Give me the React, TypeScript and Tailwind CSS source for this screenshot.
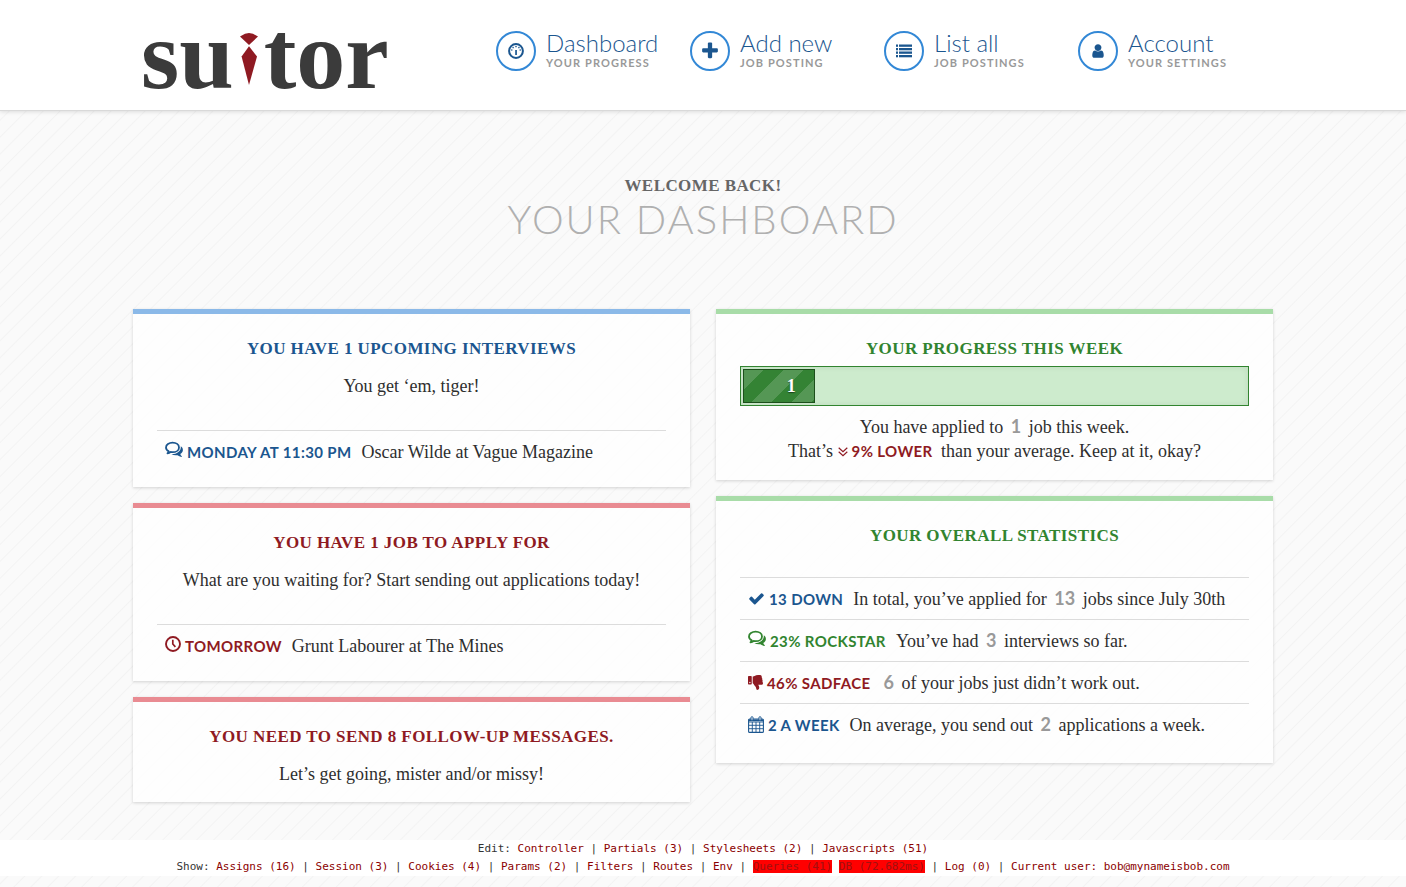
import type { ReactNode } from "react";
import { FaThumbsDown } from "react-icons/fa";

const SANS = "font-['Lato','Open_Sans',sans-serif]";
const STRIPES =
  "bg-[#fafafa] bg-[repeating-linear-gradient(135deg,#fafafa_0px,#f3f3f3_1px,#fafafa_2px,#fafafa_12px)]";

const PATHS = {
  plus: "M1600 736v192q0 40-28 68t-68 28h-416v416q0 40-28 68t-68 28h-192q-40 0-68-28t-28-68v-416h-416q-40 0-68-28t-28-68v-192q0-40 28-68t68-28h416v-416q0-40 28-68t68-28h192q40 0 68 28t28 68v416h416q40 0 68 28t28 68z",
  check:
    "M1671 566q0 40-28 68l-724 724-136 136q-28 28-68 28t-68-28l-136-136-362-362q-28-28-28-68t28-68l136-136q28-28 68-28t68 28l294 295 656-657q28-28 68-28t68 28l136 136q28 28 28 68z",
  user: "M1536 1399q0 109-62.5 187t-150.5 78h-854q-88 0-150.5-78t-62.5-187q0-85 8.5-160.5t31.5-152 58.5-131 94-89 134.5-34.5q131 128 313 128t313-128q76 0 134.5 34.5t94 89 58.5 131 31.5 152 8.5 160.5zm-256-887q0 159-112.5 271.5t-271.5 112.5-271.5-112.5-112.5-271.5 112.5-271.5 271.5-112.5 271.5 112.5 112.5 271.5z",
};

function Glyph({ name, className }: { name: keyof typeof PATHS; className: string }) {
  return (
    <svg viewBox="0 0 1792 1792" fill="currentColor" aria-hidden="true" className={className}>
      <path d={PATHS[name]} />
    </svg>
  );
}

function CommentsIcon() {
  return (
    <svg viewBox="0 0 18 17" aria-hidden="true" className="-mt-1 h-[17px] w-[18px]">
      <path
        d="M7.6 1.6c3.6 0 6.4 2 6.4 4.8s-2.8 4.8-6.4 4.8c-.7 0-1.3-.1-1.9-.2-.9.7-1.9 1.2-3.2 1.4.6-.7 1-1.4 1.2-2.2C2 9.3 1 8 1 6.4c0-2.8 3-4.8 6.6-4.8z"
        fill="none"
        stroke="currentColor"
        strokeWidth="1.8"
        strokeLinejoin="round"
      />
      <path
        d="M15.8 5.2c1.3.9 2.1 2.2 2.1 3.7 0 1.7-1 3.1-2.6 4 .2.8.7 1.6 1.5 2.4.2.3 0 .6-.3.6-1.5-.2-2.9-.8-4-1.7-2.2.4-4.4 0-6.1-1.1 5.3.1 9.9-2.7 9.4-7.9z"
        fill="currentColor"
      />
    </svg>
  );
}

function GaugeIcon() {
  return (
    <svg viewBox="0 0 16 16" aria-hidden="true" className="size-4">
      <circle cx="8" cy="8" r="6.9" fill="none" stroke="currentColor" strokeWidth="2" />
      <g fill="currentColor">
        <rect x="7.2" y="7" width="1.7" height="5" />
        <circle cx="3.8" cy="7" r=".8" />
        <circle cx="5.1" cy="4.6" r=".8" />
        <circle cx="8" cy="3.6" r=".8" />
        <circle cx="10.9" cy="4.6" r=".8" />
        <circle cx="12.2" cy="7" r=".8" />
      </g>
    </svg>
  );
}

function ListIcon() {
  return (
    <svg viewBox="0 0 16 14" fill="currentColor" aria-hidden="true" className="h-3.5 w-4">
      {[0.5, 4, 7.5, 11].map((y) => (
        <g key={y}>
          <rect x="0" y={y} width="2" height="2.3" />
          <rect x="3" y={y} width="13" height="2.3" />
        </g>
      ))}
    </svg>
  );
}

function ClockIcon() {
  return (
    <svg viewBox="0 0 16 16" fill="none" stroke="currentColor" aria-hidden="true" className="-mt-1 size-4">
      <circle cx="8" cy="8" r="7" strokeWidth="1.9" />
      <path d="M7.8 3.8V8l2.6 2.8" strokeWidth="1.7" />
    </svg>
  );
}

function CalendarIcon() {
  return (
    <svg viewBox="0 0 16 17" fill="none" stroke="currentColor" aria-hidden="true" className="h-[17px] w-4">
      <rect x=".6" y="3" width="14.8" height="13.4" rx="1" strokeWidth="1.1" />
      <path d="M.6 3.4h14.8v1.8H.6z" fill="currentColor" stroke="none" />
      <path d="M1 6h14M1 9.3h14M1 12.7h14M4.3 6v10M8 6v10M11.7 6v10" strokeWidth=".9" />
      <rect x="3" y=".7" width="2" height="3.6" rx=".9" fill="#fff" strokeWidth="1" />
      <rect x="11" y=".7" width="2" height="3.6" rx=".9" fill="#fff" strokeWidth="1" />
    </svg>
  );
}

function DoubleChevronDown() {
  return (
    <svg
      viewBox="0 0 10 10"
      fill="none"
      stroke="currentColor"
      strokeWidth="1.2"
      aria-hidden="true"
      className="mr-1 inline-block size-2.5 align-baseline"
    >
      <path d="M.7 .8L5 4.8 9.3 .8M.7 4.8L5 8.8 9.3 4.8" />
    </svg>
  );
}

function Logo() {
  return (
    <a
      href="#home"
      aria-label="suitor"
      className="ml-2 flex items-start font-['Liberation_Serif',serif] text-[98px] leading-[110px] font-bold text-[#3b3b3b]"
    >
      <span>su</span>
      <svg viewBox="0 0 18 52" aria-hidden="true" className="mx-[6px] mt-[33px] h-[52px] w-[18px]" fill="#8f1a22">
        <path d="M0 3.5 5 .8 9 0l4 .8 5 2.7L9 12z" />
        <path d="M9 13.2 17 23.5 9 52 1.6 23.5z" />
      </svg>
      <span>tor</span>
    </a>
  );
}

const NAV: { title: string; sub: string; icon: ReactNode }[] = [
  { title: "Dashboard", sub: "Your progress", icon: <GaugeIcon /> },
  { title: "Add new", sub: "Job posting", icon: <Glyph name="plus" className="size-5" /> },
  { title: "List all", sub: "Job postings", icon: <ListIcon /> },
  { title: "Account", sub: "Your settings", icon: <Glyph name="user" className="size-4" /> },
];

const TONES = {
  blue: { border: "border-[#8bb9e8]", text: "text-[#1b568f]" },
  red: { border: "border-[#e98b92]", text: "text-[#8f1a22]" },
  green: { border: "border-[#a8dca8]", text: "text-[#31842f]" },
};
type Tone = keyof typeof TONES;

function Card({ tone, title, className, children }: { tone: Tone; title: string; className: string; children: ReactNode }) {
  return (
    <section
      className={`border-t-[5px] bg-white/80 px-6 pt-6 text-center shadow-[0_1px_3px_rgba(0,0,0,0.16)] ${TONES[tone].border} ${className}`}
    >
      <h2 className={`text-[17px] leading-[22px] font-bold tracking-wide uppercase ${TONES[tone].text}`}>{title}</h2>
      {children}
    </section>
  );
}

function Row({ tone, icon, label, children }: { tone: Tone; icon: ReactNode; label: string; children: ReactNode }) {
  return (
    <li className="flex h-[42px] items-center border-t border-[#dcdcdc] px-2 text-left">
      <span className={`mr-[10px] flex items-center gap-1 text-[15px] font-bold tracking-wide uppercase ${SANS} ${TONES[tone].text}`}>
        {icon}
        {label}
      </span>
      <span>{children}</span>
    </li>
  );
}

function Num({ children }: { children: ReactNode }) {
  return <span className={`mx-[3px] text-lg leading-none font-bold text-[#999] ${SANS}`}>{children}</span>;
}

const EDIT_LINKS = ["Controller", "Partials (3)", "Stylesheets (2)", "Javascripts (51)"];
const SHOW_LINKS = ["Assigns (16)", "Session (3)", "Cookies (4)", "Params (2)", "Filters", "Routes", "Env"];

export default function App() {
  return (
    <div className={`min-h-screen font-['Liberation_Serif',serif] text-lg leading-6 text-[#2e2e2e] ${STRIPES}`}>
      <header className="border-b border-[#d9d9d9] bg-white shadow-[0_1px_4px_rgba(0,0,0,0.12)]">
        <div className="mx-auto flex h-[110px] max-w-[1140px] items-start">
          <Logo />
          <nav className="mt-[30px] mr-px ml-auto grid grid-cols-[repeat(4,194px)]">
            {NAV.map((item) => (
              <a key={item.title} href="#nav" className={`flex items-start gap-[10px] ${SANS}`}>
                <span className="mt-px flex size-10 items-center justify-center rounded-full border-2 border-[#3388d6] text-[#1b568f]">
                  {item.icon}
                </span>
                <span className="flex flex-col">
                  <span className="text-2xl leading-[26px] font-light text-[#1b568f]">{item.title}</span>
                  <span className="text-[11px] leading-[14px] font-bold tracking-widest text-[#999] uppercase">{item.sub}</span>
                </span>
              </a>
            ))}
          </nav>
        </div>
      </header>

      <main className="mx-auto max-w-[1140px]">
        <div className="pt-[63px] text-center uppercase">
          <p className="text-[17px] leading-6 font-bold tracking-wide text-[#666]">Welcome back!</p>
          <h1 className={`text-[40px] leading-[42px] font-light tracking-wider text-[#b0b0b0] ${SANS}`}>Your dashboard</h1>
        </div>

        <div className="mt-[69px] grid grid-cols-2 items-start gap-[26px]">
          <div className="flex flex-col gap-4">
            <Card tone="blue" title="You have 1 upcoming interviews" className="pb-[15px]">
              <p className="mt-[14px]">You get ‘em, tiger!</p>
              <ul className="mt-8">
                <Row tone="blue" label="Monday at 11:30 PM" icon={<CommentsIcon />}>
                  Oscar Wilde at Vague Magazine
                </Row>
              </ul>
            </Card>
            <Card tone="red" title="You have 1 job to apply for" className="pb-[15px]">
              <p className="mt-[14px]">What are you waiting for? Start sending out applications today!</p>
              <ul className="mt-8">
                <Row tone="red" label="Tomorrow" icon={<ClockIcon />}>
                  Grunt Labourer at The Mines
                </Row>
              </ul>
            </Card>
            <Card tone="red" title="You need to send 8 follow-up messages." className="pb-4">
              <p className="mt-[14px]">Let’s get going, mister and/or missy!</p>
            </Card>
          </div>

          <div className="flex flex-col gap-4">
            <Card tone="green" title="Your progress this week" className="pb-[17px]">
              <div
                role="progressbar"
                aria-label="Applications this week"
                aria-valuenow={1}
                className="mt-[6px] h-10 border border-[#31842f] bg-[#cdebcd] p-0.5 shadow-[inset_0_0_6px_rgba(0,0,0,0.08)]"
              >
                <div
                  className="flex h-full items-center justify-end border border-[#1d4f1c] bg-[#348334] bg-[linear-gradient(135deg,rgba(255,255,255,0.16)_25%,transparent_25%,transparent_50%,rgba(255,255,255,0.16)_50%,rgba(255,255,255,0.16)_75%,transparent_75%)] bg-[length:40px_40px] pr-[18px] font-bold text-white [text-shadow:0_1px_1px_rgba(0,0,0,0.5)]"
                  style={{ width: `${(1 / 7) * 100}%` }}
                >
                  1
                </div>
              </div>
              <p className="mt-[9px]">
                You have applied to <Num>1</Num> job this week.
              </p>
              <p>
                That’s{" "}
                <span className={`mr-1 text-[15px] leading-none font-bold tracking-wide text-[#8f1a22] uppercase ${SANS}`}>
                  <DoubleChevronDown />
                  9% Lower
                </span>{" "}
                than your average. Keep at it, okay?
              </p>
            </Card>
            <Card tone="green" title="Your overall statistics" className="pb-[18px]">
              <ul className="mt-[30px]">
                <Row tone="blue" label="13 down" icon={<Glyph name="check" className="size-[17px]" />}>
                  In total, you’ve applied for <Num>13</Num> jobs since July 30th
                </Row>
                <Row tone="green" label="23% rockstar" icon={<CommentsIcon />}>
                  You’ve had <Num>3</Num> interviews so far.
                </Row>
                <Row tone="red" label="46% sadface" icon={<FaThumbsDown className="size-[15px]" />}>
                  <Num>6</Num> of your jobs just didn’t work out.
                </Row>
                <Row tone="blue" label="2 a week" icon={<CalendarIcon />}>
                  On average, you send out <Num>2</Num> applications a week.
                </Row>
              </ul>
            </Card>
          </div>
        </div>
      </main>

      <footer className="mt-[38px] bg-white text-center font-['DejaVu_Sans_Mono',monospace] text-[11px] leading-[18px] text-[#333]">
        <p>
          Edit:{" "}
          {EDIT_LINKS.map((label, i) => (
            <span key={label}>
              {i > 0 && " | "}
              <a href="#edit" className="text-[#8b0000]">{label}</a>
            </span>
          ))}
        </p>
        <p>
          Show:{" "}
          {SHOW_LINKS.map((label) => (
            <span key={label}>
              <a href="#show" className="text-[#8b0000]">{label}</a>
              {" | "}
            </span>
          ))}
          <a href="#queries" className="bg-[#f00] text-[#a01010]">Queries (41)</a>{" "}
          <a href="#db" className="bg-[#f00] text-[#a01010]">DB (72.682ms)</a>
          {" | "}
          <a href="#log" className="text-[#8b0000]">Log (0)</a>
          {" | "}
          <a href="#user" className="text-[#8b0000]">Current user: bob@mynameisbob.com</a>
        </p>
      </footer>
    </div>
  );
}
